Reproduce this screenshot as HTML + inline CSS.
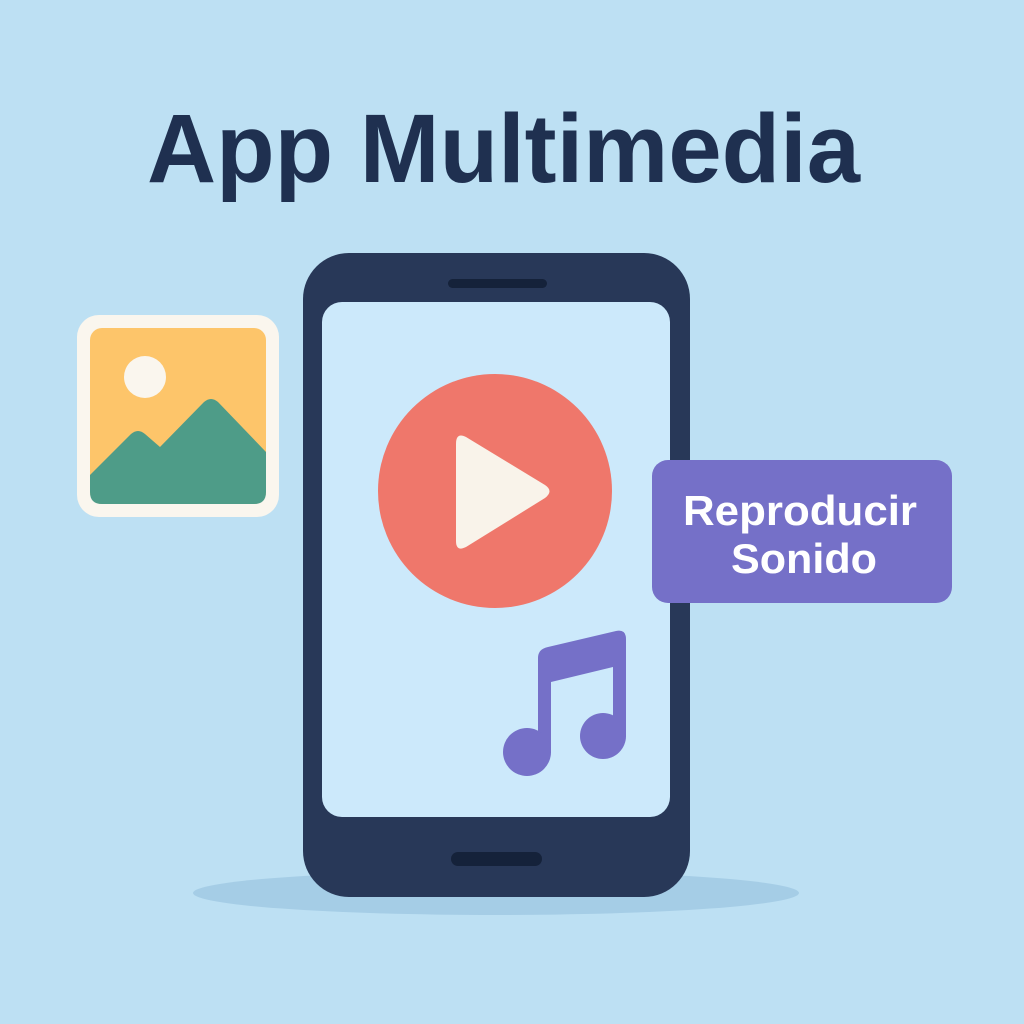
<!DOCTYPE html>
<html><head><meta charset="utf-8"><style>
html,body{margin:0;padding:0;background:#bde0f3;}
svg{display:block}
</style></head><body>
<svg width="1024" height="1024" viewBox="0 0 1024 1024" xmlns="http://www.w3.org/2000/svg">
<rect width="1024" height="1024" fill="#bde0f3"/>
<text x="147" y="182" font-family="Liberation Sans, sans-serif" font-weight="bold" font-size="97" fill="#1f3050" textLength="713" lengthAdjust="spacingAndGlyphs">App Multimedia</text>
<ellipse cx="496" cy="893" rx="303" ry="22" fill="#a5cde6"/>
<rect x="303" y="253" width="387" height="644" rx="46" fill="#283858"/>
<rect x="322" y="302" width="348" height="515" rx="20" fill="#cce9fb"/>
<rect x="448" y="279" width="99" height="9" rx="4.5" fill="#15223a"/>
<rect x="451" y="852" width="91" height="14" rx="7" fill="#15223a"/>
<circle cx="495" cy="491" r="117" fill="#ef776b"/>
<path d="M466,437 Q456,432 456,444 L456,541 Q456,552 466,547 L545,498 Q554,491 545,485 Z" fill="#f9f3ea"/>
<path d="M538,658 Q538,649 548,647 L616,631 Q626,629 626,639 L626,737 L613,737 L613,667 L551,682 L551,753 L538,753 Z" fill="#7570c8"/>
<circle cx="527" cy="752" r="24" fill="#7570c8"/>
<circle cx="603" cy="736" r="23" fill="#7570c8"/>
<rect x="77" y="315" width="202" height="202" rx="22" fill="#faf6ee"/>
<rect x="90" y="328" width="176" height="176" rx="12" fill="#fdc56a"/>
<circle cx="145" cy="377" r="21" fill="#faf6ee"/>
<path d="M90,475 L131,434 Q138,428 145,434 L160,447 L204,402 Q211,396 218,402 L266,452 L266,492 Q266,504 254,504 L102,504 Q90,504 90,492 Z" fill="#4e9c88"/>
<rect x="652" y="460" width="300" height="143" rx="16" fill="#7570c8"/>
<text x="800" y="525" text-anchor="middle" font-family="Liberation Sans, sans-serif" font-weight="bold" font-size="42" fill="#ffffff" textLength="234" lengthAdjust="spacingAndGlyphs">Reproducir</text>
<text x="804" y="573" text-anchor="middle" font-family="Liberation Sans, sans-serif" font-weight="bold" font-size="42" fill="#ffffff" textLength="146" lengthAdjust="spacingAndGlyphs">Sonido</text>
</svg>
</body></html>
